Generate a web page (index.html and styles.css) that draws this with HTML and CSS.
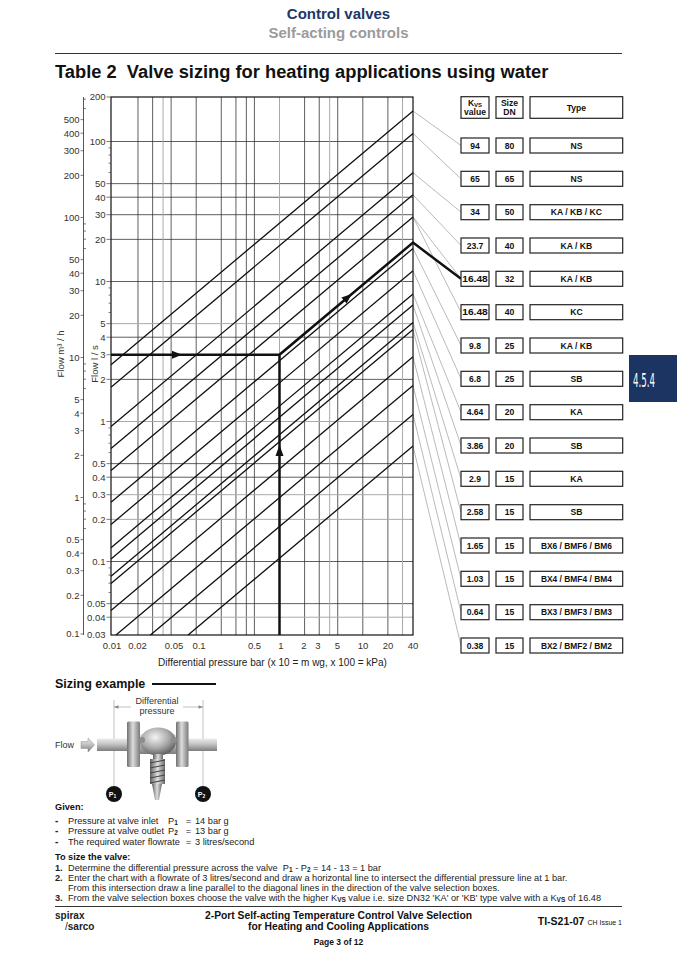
FILE: index.html
```html
<!DOCTYPE html>
<html lang="en">
<head>
<meta charset="utf-8">
<title>Table 2 Valve sizing for heating applications using water</title>
<link rel="stylesheet" href="styles.css">
</head>
<body>
<div class="page">
  <header class="doc-head">
    <div class="head-main">Control valves</div>
    <div class="head-sub">Self-acting controls</div>
  </header>
  <div class="rule"></div>
  <h1 class="table-title">Table 2&nbsp; Valve sizing for heating applications using water</h1>

  <svg class="chart" viewBox="0 83 677 593" width="677" height="593" xmlns="http://www.w3.org/2000/svg">
    <!-- grid -->
    <path class="grid-k" d="M137.98 97V635M152.64 97V635M171.12 97V635M196.2 97V635M221.28 97V635M235.94 97V635M246.35 97V635M254.42 97V635M304.58 97V635M319.24 97V635M337.72 97V635M362.8 97V635M387.88 97V635
      M111 141.5H413M111 183.64H413M111 197.21H413M111 214.7H413M111 239.36H413M111 281.5H413M111 337.21H413M111 379.36H413M111 463.64H413M111 477.21H413M111 561.5H413M111 603.64H413"/>
    <path class="grid-g" d="M163.05 97V635M279.5 97V635M329.65 97V635M402.54 97V635
      M111 323.64H413M111 421.5H413M111 494.7H413M111 519.36H413M111 617.21H413"/>

    <!-- diagonal Kvs lines -->
    <path class="diag" d="M111 364.8L413 111M111 387.2L413 133.4M111 426.6L413 172.8M111 448.5L413 194.8M111 470.6L413 216.9M111 502.2L413 248.5M111 524.4L413 270.7M111 547.7L413 293.9M111 558.9L413 305.1M111 576.3L413 322.5M111 583.4L413 329.6M111 610.5L413 356.8M116 635L413 385.5M150.4 635L413 414.4M188.1 635L413 446.1"/>

    <!-- connectors to boxes -->
    <path class="conn" d="M413 111L461 145.5M413 133.4L461 178.8M413 172.8L461 212.2M413 194.8L461 245.5M413 216.9L461 278.8M413 216.9L461 312.2M413 248.5L461 345.5M413 270.7L461 378.8M413 293.9L461 412.2M413 305.1L461 445.5M413 322.5L461 478.8M413 329.6L461 512.2M413 356.8L461 545.5M413 385.5L461 578.8M413 414.4L461 612.2M413 446.1L461 645.5"/>

    <rect class="frame" x="111" y="97" width="302" height="538"/>

    <!-- worked example -->
    <path class="ex" d="M111 354.7H279.5M279.5 635V354.7L413 242.6L461 278.8"/>
    <polygon class="arrow" points="182,354.7 172,350.7 172,358.7"/>
    <polygon class="arrow" points="279.5,445 275.5,456 283.5,456"/>
    <polygon class="arrow" points="351.7,294 346.6,303.5 341.4,297.4"/>

    <!-- l/s axis -->
    <path class="tick" d="M106.5 97H111M106.5 141.5H111M106.5 183.64H111M106.5 197.21H111M106.5 214.7H111M106.5 239.36H111M106.5 281.5H111M106.5 323.64H111M106.5 337.21H111M106.5 354.7H111M106.5 379.36H111M106.5 421.5H111M106.5 463.64H111M106.5 477.21H111M106.5 494.7H111M106.5 519.36H111M106.5 561.5H111M106.5 603.64H111M106.5 617.21H111
      M108.5 147.9H111M108.5 155.07H111M108.5 163.19H111M108.5 172.56H111M108.5 287.9H111M108.5 295.07H111M108.5 303.19H111M108.5 312.56H111M108.5 427.9H111M108.5 435.07H111M108.5 443.19H111M108.5 452.56H111M108.5 567.9H111M108.5 575.07H111M108.5 583.19H111M108.5 592.56H111"/>
    <g class="ax ax-r">
      <text x="105.5" y="100.4">200</text>
      <text x="105.5" y="144.9">100</text>
      <text x="105.5" y="187">50</text>
      <text x="105.5" y="200.6">40</text>
      <text x="105.5" y="218.1">30</text>
      <text x="105.5" y="242.8">20</text>
      <text x="105.5" y="284.9">10</text>
      <text x="105.5" y="327">5</text>
      <text x="105.5" y="340.6">4</text>
      <text x="105.5" y="358.1">3</text>
      <text x="105.5" y="382.8">2</text>
      <text x="105.5" y="424.9">1</text>
      <text x="105.5" y="467">0.5</text>
      <text x="105.5" y="480.6">0.4</text>
      <text x="105.5" y="498.1">0.3</text>
      <text x="105.5" y="522.8">0.2</text>
      <text x="105.5" y="564.9">0.1</text>
      <text x="105.5" y="607">0.05</text>
      <text x="105.5" y="620.6">0.04</text>
      <text x="105.5" y="638.1">0.03</text>
    </g>

    <!-- m3/h axis -->
    <path class="axis-line" d="M83.5 97V635"/>
    <path class="tick" d="M80.5 119.64H83.5M80.5 133.21H83.5M80.5 150.7H83.5M80.5 175.36H83.5M80.5 217.5H83.5M80.5 259.64H83.5M80.5 273.21H83.5M80.5 290.7H83.5M80.5 315.36H83.5M80.5 357.5H83.5M80.5 399.64H83.5M80.5 413.21H83.5M80.5 430.7H83.5M80.5 455.36H83.5M80.5 497.5H83.5M80.5 539.64H83.5M80.5 553.21H83.5M80.5 570.7H83.5M80.5 595.36H83.5M80.5 634H83.5
      M83.5 99.19H86M83.5 108.56H86M83.5 223.9H86M83.5 231.07H86M83.5 239.19H86M83.5 248.56H86M83.5 363.9H86M83.5 371.07H86M83.5 379.19H86M83.5 388.56H86M83.5 503.9H86M83.5 511.07H86M83.5 519.19H86M83.5 528.56H86"/>
    <g class="ax ax-r">
      <text x="79.5" y="123">500</text>
      <text x="79.5" y="136.6">400</text>
      <text x="79.5" y="154.1">300</text>
      <text x="79.5" y="178.8">200</text>
      <text x="79.5" y="220.9">100</text>
      <text x="79.5" y="263">50</text>
      <text x="79.5" y="276.6">40</text>
      <text x="79.5" y="294.1">30</text>
      <text x="79.5" y="318.8">20</text>
      <text x="79.5" y="360.9">10</text>
      <text x="79.5" y="403">5</text>
      <text x="79.5" y="416.6">4</text>
      <text x="79.5" y="434.1">3</text>
      <text x="79.5" y="458.8">2</text>
      <text x="79.5" y="500.9">1</text>
      <text x="79.5" y="543">0.5</text>
      <text x="79.5" y="556.6">0.4</text>
      <text x="79.5" y="574.1">0.3</text>
      <text x="79.5" y="598.8">0.2</text>
      <text x="79.5" y="637.4">0.1</text>
    </g>

    <text class="ax ax-m ax-title" transform="translate(63.5 354) rotate(-90)">Flow m³ / h</text>
    <text class="ax ax-m ax-title" transform="translate(98 364) rotate(-90)">Flow l / s</text>

    <!-- x axis -->
    <g class="ax ax-m">
      <text x="112" y="649">0.01</text>
      <text x="137.5" y="649">0.02</text>
      <text x="174" y="649">0.05</text>
      <text x="199" y="649">0.1</text>
      <text x="254.5" y="649">0.5</text>
      <text x="281" y="649">1</text>
      <text x="304" y="649">2</text>
      <text x="318" y="649">3</text>
      <text x="337.5" y="649">5</text>
      <text x="363" y="649">10</text>
      <text x="388" y="649">20</text>
      <text x="413" y="649">40</text>
    </g>
    <text class="ax ax-m cap" x="272.5" y="666">Differential pressure bar (x 10 = m wg, x 100 = kPa)</text>

    <!-- selection boxes -->
    <g class="boxes">
      <rect x="461" y="96.7" width="28" height="21.6"/>
      <rect x="496" y="96.7" width="27" height="21.6"/>
      <rect x="530" y="96.7" width="92.7" height="21.6"/>
    </g>
    <g class="bx-t">
      <text x="475" y="105.8">K<tspan class="sub-s" dy="1.3">VS</tspan></text>
      <text x="475" y="115">value</text>
      <text x="509.5" y="105.8">Size</text>
      <text x="509.5" y="115">DN</text>
      <text x="576.4" y="110.8">Type</text>
    </g>

    <g class="boxes">
      <rect x="461" y="138" width="28" height="15"/><rect x="496" y="138" width="27" height="15"/><rect x="530" y="138" width="92.7" height="15"/>
      <rect x="461" y="171.3" width="28" height="15"/><rect x="496" y="171.3" width="27" height="15"/><rect x="530" y="171.3" width="92.7" height="15"/>
      <rect x="461" y="204.7" width="28" height="15"/><rect x="496" y="204.7" width="27" height="15"/><rect x="530" y="204.7" width="92.7" height="15"/>
      <rect x="461" y="238" width="28" height="15"/><rect x="496" y="238" width="27" height="15"/><rect x="530" y="238" width="92.7" height="15"/>
      <rect x="461" y="271.3" width="28" height="15"/><rect x="496" y="271.3" width="27" height="15"/><rect x="530" y="271.3" width="92.7" height="15"/>
      <rect x="461" y="304.7" width="28" height="15"/><rect x="496" y="304.7" width="27" height="15"/><rect x="530" y="304.7" width="92.7" height="15"/>
      <rect x="461" y="338" width="28" height="15"/><rect x="496" y="338" width="27" height="15"/><rect x="530" y="338" width="92.7" height="15"/>
      <rect x="461" y="371.3" width="28" height="15"/><rect x="496" y="371.3" width="27" height="15"/><rect x="530" y="371.3" width="92.7" height="15"/>
      <rect x="461" y="404.7" width="28" height="15"/><rect x="496" y="404.7" width="27" height="15"/><rect x="530" y="404.7" width="92.7" height="15"/>
      <rect x="461" y="438" width="28" height="15"/><rect x="496" y="438" width="27" height="15"/><rect x="530" y="438" width="92.7" height="15"/>
      <rect x="461" y="471.3" width="28" height="15"/><rect x="496" y="471.3" width="27" height="15"/><rect x="530" y="471.3" width="92.7" height="15"/>
      <rect x="461" y="504.7" width="28" height="15"/><rect x="496" y="504.7" width="27" height="15"/><rect x="530" y="504.7" width="92.7" height="15"/>
      <rect x="461" y="538" width="28" height="15"/><rect x="496" y="538" width="27" height="15"/><rect x="530" y="538" width="92.7" height="15"/>
      <rect x="461" y="571.3" width="28" height="15"/><rect x="496" y="571.3" width="27" height="15"/><rect x="530" y="571.3" width="92.7" height="15"/>
      <rect x="461" y="604.7" width="28" height="15"/><rect x="496" y="604.7" width="27" height="15"/><rect x="530" y="604.7" width="92.7" height="15"/>
      <rect x="461" y="638" width="28" height="15"/><rect x="496" y="638" width="27" height="15"/><rect x="530" y="638" width="92.7" height="15"/>
    </g>
    <g class="bx-t">
      <text x="475" y="148.6">94</text><text x="509.5" y="148.6">80</text><text x="576.4" y="148.6">NS</text>
      <text x="475" y="181.9">65</text><text x="509.5" y="181.9">65</text><text x="576.4" y="181.9">NS</text>
      <text x="475" y="215.3">34</text><text x="509.5" y="215.3">50</text><text x="576.4" y="215.3">KA / KB / KC</text>
      <text x="475" y="248.6">23.7</text><text x="509.5" y="248.6">40</text><text x="576.4" y="248.6">KA / KB</text>
      <text x="475" y="281.9" textLength="25.5" lengthAdjust="spacingAndGlyphs">16.48</text><text x="509.5" y="281.9">32</text><text x="576.4" y="281.9">KA / KB</text>
      <text x="475" y="315.3" textLength="25.5" lengthAdjust="spacingAndGlyphs">16.48</text><text x="509.5" y="315.3">40</text><text x="576.4" y="315.3">KC</text>
      <text x="475" y="348.6">9.8</text><text x="509.5" y="348.6">25</text><text x="576.4" y="348.6">KA / KB</text>
      <text x="475" y="381.9">6.8</text><text x="509.5" y="381.9">25</text><text x="576.4" y="381.9">SB</text>
      <text x="475" y="415.3">4.64</text><text x="509.5" y="415.3">20</text><text x="576.4" y="415.3">KA</text>
      <text x="475" y="448.6">3.86</text><text x="509.5" y="448.6">20</text><text x="576.4" y="448.6">SB</text>
      <text x="475" y="481.9">2.9</text><text x="509.5" y="481.9">15</text><text x="576.4" y="481.9">KA</text>
      <text x="475" y="515.3">2.58</text><text x="509.5" y="515.3">15</text><text x="576.4" y="515.3">SB</text>
      <text x="475" y="548.6">1.65</text><text x="509.5" y="548.6">15</text><text x="576.4" y="548.6" textLength="71" lengthAdjust="spacingAndGlyphs">BX6 / BMF6 / BM6</text>
      <text x="475" y="581.9">1.03</text><text x="509.5" y="581.9">15</text><text x="576.4" y="581.9" textLength="71" lengthAdjust="spacingAndGlyphs">BX4 / BMF4 / BM4</text>
      <text x="475" y="615.3">0.64</text><text x="509.5" y="615.3">15</text><text x="576.4" y="615.3" textLength="71" lengthAdjust="spacingAndGlyphs">BX3 / BMF3 / BM3</text>
      <text x="475" y="648.6">0.38</text><text x="509.5" y="648.6">15</text><text x="576.4" y="648.6" textLength="71" lengthAdjust="spacingAndGlyphs">BX2 / BMF2 / BM2</text>
    </g>

    <!-- section tab -->
    <rect class="tab" x="629" y="355" width="48" height="47"/>
    <text class="tab-t" x="633" y="387" textLength="22" lengthAdjust="spacingAndGlyphs">4.5.4</text>
  </svg>

  <h2 class="example-title">Sizing example <span class="title-bar"></span></h2>

  <svg class="illus" viewBox="0 692 677 110" width="677" height="110" xmlns="http://www.w3.org/2000/svg">
    <defs>
      <linearGradient id="pipeG" x1="0" y1="0" x2="0" y2="1">
        <stop offset="0" stop-color="#ececec"/>
        <stop offset="0.45" stop-color="#c4c4c4"/>
        <stop offset="1" stop-color="#7d7d7d"/>
      </linearGradient>
      <linearGradient id="flangeG" x1="0" y1="0" x2="1" y2="0">
        <stop offset="0" stop-color="#6f6f6f"/>
        <stop offset="0.45" stop-color="#dcdcdc"/>
        <stop offset="1" stop-color="#7a7a7a"/>
      </linearGradient>
      <radialGradient id="ballG" cx="0.42" cy="0.35" r="0.7">
        <stop offset="0" stop-color="#f4f4f4"/>
        <stop offset="0.55" stop-color="#a9a9a9"/>
        <stop offset="1" stop-color="#555"/>
      </radialGradient>
      <linearGradient id="stemG" x1="0" y1="0" x2="1" y2="0">
        <stop offset="0" stop-color="#5e5e5e"/>
        <stop offset="0.5" stop-color="#dedede"/>
        <stop offset="1" stop-color="#6a6a6a"/>
      </linearGradient>
    </defs>
    <text class="il-t" x="157" y="703.5">Differential</text>
    <text class="il-t" x="157" y="713.5">pressure</text>
    <path class="dim" d="M114 700V786M203 700V786M114 707H131M183 707H203"/>
    <polygon class="dim-a" points="114,707 118.5,705.3 118.5,708.7"/>
    <polygon class="dim-a" points="203,707 198.5,705.3 198.5,708.7"/>

    <text class="il-f" x="55" y="748">Flow</text>
    <polygon points="81,741.6 88,741.6 88,738 94.5,745 88,752 88,748.4 81,748.4" fill="url(#pipeG)" stroke="#777" stroke-width="0.4"/>

    <rect x="97" y="738.5" width="120" height="12.5" fill="url(#pipeG)"/>
    <rect x="127" y="721.5" width="13" height="45.5" rx="1.5" fill="url(#flangeG)"/>
    <rect x="176" y="721.5" width="12.5" height="45.5" rx="1.5" fill="url(#flangeG)"/>
    <rect x="140" y="734" width="36" height="20" fill="url(#pipeG)"/>
    <ellipse cx="158" cy="741.5" rx="18" ry="14" fill="url(#ballG)"/>
    <circle cx="142" cy="740" r="3" fill="#8d8d8d"/>
    <circle cx="174" cy="740" r="3" fill="#8d8d8d"/>
    <rect x="153" y="754" width="10" height="6" fill="url(#stemG)"/>
    <rect x="150" y="759" width="15" height="25" fill="url(#stemG)"/>
    <path class="thread" d="M150 763L165 760M150 768L165 765M150 773L165 770M150 778L165 775M150 783L165 780"/>
    <polygon points="152,784 162,784 159,800 155,800" fill="url(#stemG)"/>

    <circle cx="114" cy="794" r="8" fill="#111"/>
    <circle cx="203" cy="794" r="8" fill="#111"/>
    <text class="p-t" x="112.5" y="796.5">P<tspan class="p-sub" dy="1.5">1</tspan></text>
    <text class="p-t" x="201.5" y="796.5">P<tspan class="p-sub" dy="1.5">2</tspan></text>
  </svg>

  <div class="given">
    <div class="given-head">Given:</div>
    <div class="given-row"><span class="dash">-</span><span>Pressure at valve inlet</span><span>P<sub>1</sub></span><span class="eq">=</span><span>14 bar g</span></div>
    <div class="given-row"><span class="dash">-</span><span>Pressure at valve outlet</span><span>P<sub>2</sub></span><span class="eq">=</span><span>13 bar g</span></div>
    <div class="given-row"><span class="dash">-</span><span class="span2">The required water flowrate</span><span class="eq">=</span><span>3 litres/second</span></div>
  </div>

  <div class="steps">
    <div class="steps-head">To size the valve:</div>
    <div class="step"><span class="num">1.</span><span>Determine the differential pressure across the valve&nbsp; P<sub>1</sub> - P<sub>2</sub> = 14 - 13 = 1 bar</span></div>
    <div class="step"><span class="num">2.</span><span>Enter the chart with a flowrate of 3 litres/second and draw a horizontal line to intersect the differential pressure line at 1 bar.<br>From this intersection draw a line parallel to the diagonal lines in the direction of the valve selection boxes.</span></div>
    <div class="step"><span class="num">3.</span><span>From the valve selection boxes choose the valve with the higher K<sub>VS</sub> value i.e. size DN32 'KA' or 'KB' type valve with a K<sub>VS</sub> of 16.48</span></div>
  </div>

  <div class="rule rule-foot"></div>
  <footer class="foot">
    <div class="logo"><span class="logo-a">spirax</span><span class="logo-b"><span class="logo-slash">/</span>sarco</span></div>
    <div class="foot-title">2-Port Self-acting Temperature Control Valve Selection<br>for Heating and Cooling Applications</div>
    <div class="foot-id"><b>TI-S21-07</b> <span class="issue">CH Issue 1</span></div>
  </footer>
  <div class="page-no">Page 3 of 12</div>
</div>
</body>
</html>
```

FILE: styles.css
```css
* { box-sizing: border-box; }

body {
  margin: 0;
  background: #fff;
  color: #222;
  font-family: "Liberation Sans", Arial, sans-serif;
}

.page { width: 677px; }

/* header */
.doc-head {
  padding-top: 4px;
  text-align: center;
  font-weight: bold;
  font-size: 15px;
  line-height: 19px;
}
.head-main { color: #1c3867; }
.head-sub { color: #9b9b9b; }

.rule {
  margin: 11px 55px 0;
  border-top: 1.3px solid #333;
}

.table-title {
  margin: 7px 55px 0;
  font-size: 18.3px;
  line-height: 22px;
  font-weight: bold;
  color: #111;
}

/* chart */
.chart, .illus { display: block; }

.grid-k { stroke: #2a2a2a; stroke-width: 0.75; fill: none; }
.grid-g { stroke: #aaa; stroke-width: 1; fill: none; }
.diag { stroke: #111; stroke-width: 1.3; fill: none; }
.conn { stroke: #8c8c8c; stroke-width: 0.6; fill: none; }
.frame { stroke: #111; stroke-width: 1.2; fill: none; }
.ex { stroke: #111; stroke-width: 2.5; fill: none; stroke-linejoin: miter; }
.arrow { fill: #111; }
.tick { stroke: #444; stroke-width: 0.7; fill: none; }
.axis-line { stroke: #444; stroke-width: 0.9; fill: none; }

.ax {
  font-family: "Liberation Sans", Arial, sans-serif;
  font-size: 9.5px;
  fill: #333;
}
.ax-r { text-anchor: end; }
.ax-m { text-anchor: middle; }
.ax-title { font-size: 9.5px; }
.cap { font-size: 10px; fill: #222; }

.boxes rect { fill: #fff; stroke: #222; stroke-width: 1.2; }
.bx-t {
  font-family: "Liberation Sans", Arial, sans-serif;
  font-size: 8.6px;
  font-weight: bold;
  fill: #111;
  text-anchor: middle;
}
.sub-s { font-size: 6px; }

.tab { fill: #1b3461; }
.tab-t {
  font-family: "DejaVu Sans Condensed", "Liberation Sans Narrow", "Liberation Sans", sans-serif;
  font-size: 19px;
  fill: #fff;
}

/* sizing example */
.example-title {
  margin: 0 55px;
  font-size: 12.5px;
  line-height: 16px;
  font-weight: bold;
  color: #111;
  display: flex;
  align-items: center;
  gap: 7px;
}
.title-bar {
  display: inline-block;
  width: 64px;
  height: 2.5px;
  background: #111;
}

.il-t {
  font-family: "Liberation Sans", Arial, sans-serif;
  font-size: 9px;
  fill: #333;
  text-anchor: middle;
}
.il-f {
  font-family: "Liberation Sans", Arial, sans-serif;
  font-size: 9px;
  fill: #333;
}
.dim { stroke: #999; stroke-width: 0.6; fill: none; }
.dim-a { fill: #888; }
.thread { stroke: #444; stroke-width: 1; fill: none; }
.p-t {
  font-family: "Liberation Sans", Arial, sans-serif;
  font-size: 7px;
  font-weight: bold;
  fill: #fff;
  text-anchor: middle;
}
.p-sub { font-size: 5px; }

/* given + steps */
.given, .steps {
  margin: 0 55px;
  font-size: 9.2px;
  color: #222;
}
.given-head, .steps-head {
  font-weight: bold;
  line-height: 11px;
  color: #111;
}
.given-head { margin-bottom: 2.5px; }
.given-row {
  display: grid;
  grid-template-columns: 13px 100px 14px 13px auto;
  line-height: 10.5px;
  white-space: nowrap;
}
.given-row .span2 { grid-column: span 2; }
.dash { font-weight: bold; font-size: 10px; line-height: 10.5px; }
.eq { text-align: center; }

sub {
  font-size: 6.5px;
  line-height: 0;
  vertical-align: -1px;
  font-weight: bold;
}

.steps { margin-top: 5px; }
.steps-head { line-height: 10.5px; }
.step {
  display: grid;
  grid-template-columns: 13px auto;
  line-height: 10.2px;
  white-space: nowrap;
}
.num { font-weight: bold; }

/* footer */
.rule-foot { margin-top: 3px; }
.foot {
  margin: 0 55px;
  padding-top: 2.5px;
  display: grid;
  grid-template-columns: 1fr auto 1fr;
  align-items: center;
}
.logo {
  display: flex;
  flex-direction: column;
  align-items: flex-start;
  font-weight: bold;
  font-size: 10px;
  line-height: 11.5px;
  color: #222;
}
.logo-b { padding-left: 10px; }
.logo-slash { font-weight: normal; }
.foot-title {
  text-align: center;
  font-weight: bold;
  font-size: 10.3px;
  line-height: 11.5px;
  color: #111;
}
.foot-id {
  text-align: right;
  font-size: 10.5px;
  color: #111;
}
.issue { font-size: 7px; }
.page-no {
  margin-top: 4.5px;
  text-align: center;
  font-weight: bold;
  font-size: 8.5px;
  line-height: 11px;
  color: #111;
}
```
